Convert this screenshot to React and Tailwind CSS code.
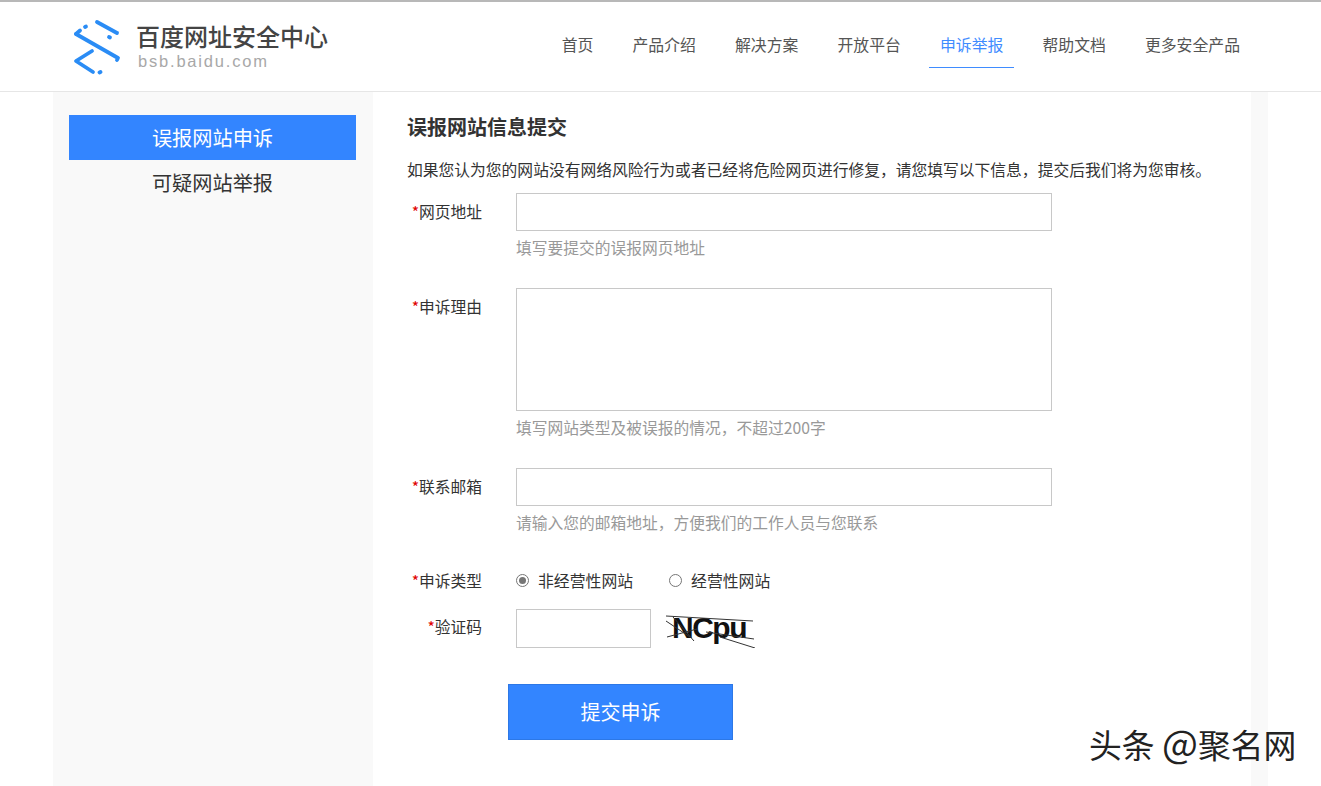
const navItems = ["首页", "产品介绍", "解决方案", "开放平台", "申诉举报", "帮助文档", "更多安全产品"];

function Logo() {
  return (
    <svg width="50" height="56" viewBox="0 0 50 56" fill="none" stroke="#2a8cf5" strokeWidth="3.8" strokeLinecap="round" strokeLinejoin="round">
      <path d="M24 3 L44 14" />
      <path d="M36 18 L37 18.500" />
      <path d="M12 8 L13 7.500" />
      <path d="M3 15 L7 11.500" />
      <path d="M3 15 L45 39 L44 41" />
      <path d="M19 32 L3 42 L20 53" />
      <path d="M26.500 53.500 L27.500 53" />
    </svg>
  );
}

function Header() {
  return (
    <header className="h-[92px] bg-white border-t-2 border-b border-t-[#b8b8b8] border-b-[#e6e6e6] flex items-center justify-between pl-[73px] pr-[70px]">
      <div className="flex items-center gap-[13px]">
        <Logo />
        <div className="flex flex-col mt-[-2px]">
          <span className="text-[24px] leading-[29px] pb-[2px] font-medium text-[#444444]">百度网址安全中心</span>
          <span className="text-[16.500px] leading-[18px] text-[#a8a8a8] tracking-[1.800px] ml-[2px] font-['Liberation_Sans',sans-serif]">bsb.baidu.com</span>
        </div>
      </div>
      <nav className="flex items-center gap-[17.100px] text-[15.850px] text-[#555555] h-[46px] mt-[-3px]">
        {navItems.map((item) => (
          <a
            key={item}
            className={
              item === "申诉举报"
                ? "h-full flex items-center px-[11px] text-[#3f8cff] border-b border-[#3f8cff]"
                : "h-full flex items-center px-[11px] border-b border-transparent"
            }
          >
            {item}
          </a>
        ))}
      </nav>
    </header>
  );
}

function Field({ label, hint, children, className }) {
  return (
    <div className={"flex " + className}>
      <label className="w-[75px] mr-[34px] shrink-0 text-right text-[15.750px] leading-[38px] text-[#333333] whitespace-nowrap">
        <span className="text-[#e00000]">*</span>
        {label}
      </label>
      <div>
        {children}
        {hint && <p className="mt-[5px] text-[15.750px] leading-[24px] text-[#999999]">{hint}</p>}
      </div>
    </div>
  );
}

function Captcha() {
  return (
    <div className="relative w-[90px] h-[40px] ml-[15px] overflow-hidden">
      <span className="absolute left-[6px] top-[2px] text-[30px] leading-[36px] font-bold text-[#111111] tracking-[-1.500px] font-['Liberation_Sans',sans-serif]">NCpu</span>
      <svg className="absolute inset-0" width="90" height="40" viewBox="0 0 90 40" fill="none" stroke="#333333" strokeWidth="1">
        <path d="M0 8 L87 13" />
        <path d="M0 13 L24 29" />
        <path d="M1 29 L31 21" />
        <path d="M7 9 L28 33" />
        <path d="M54 29 L89 40" />
        <path d="M40 24 L88 31" />
      </svg>
    </div>
  );
}

function Radio({ checked, label }) {
  return (
    <label className="flex items-center gap-[9px] text-[15.850px] text-[#333333]">
      <span className="w-[13px] h-[13px] rounded-full border border-[#767676] bg-white flex items-center justify-center">
        {checked && <span className="w-[7px] h-[7px] rounded-full bg-[#767676]" />}
      </span>
      {label}
    </label>
  );
}

export default function App() {
  return (
    <div className="h-[786px] overflow-hidden bg-white relative font-['Noto_Sans_CJK_SC','Liberation_Sans',sans-serif]">
      <Header />
      <div className="ml-[53px] w-[1215px] h-[694px] bg-[#f9f9f9] flex">
        <aside className="w-[320px] shrink-0 pl-[16px] pr-[17px] pt-[23px] text-[20.200px] text-center">
          <div className="h-[45px] leading-[45px] bg-[#3385ff] text-white">误报网站申诉</div>
          <div className="h-[45px] leading-[45px] text-[#333333]">可疑网站举报</div>
        </aside>
        <main className="w-[878px] shrink-0 bg-white pl-[34px] pt-[20px]">
          <h1 className="text-[20px] leading-[30px] font-bold text-[#333333]">误报网站信息提交</h1>
          <p className="mt-[16px] text-[15.780px] leading-[24px] text-[#333333] whitespace-nowrap">
            如果您认为您的网站没有网络风险行为或者已经将危险网页进行修复，请您填写以下信息，提交后我们将为您审核。
          </p>
          <Field label="网页地址" hint="填写要提交的误报网页地址" className="mt-[11px]">
            <input className="block w-[536px] h-[38px] bg-white border border-[#c8c8c8]" />
          </Field>
          <Field label="申诉理由" hint="填写网站类型及被误报的情况，不超过200字" className="mt-[28px]">
            <textarea className="block w-[536px] h-[123px] bg-white border border-[#c8c8c8] resize-none" />
          </Field>
          <Field label="联系邮箱" hint="请输入您的邮箱地址，方便我们的工作人员与您联系" className="mt-[28px]">
            <input className="block w-[536px] h-[38px] bg-white border border-[#c8c8c8]" />
          </Field>
          <Field label="申诉类型" className="mt-[27px] items-center">
            <div className="flex gap-[36px]">
              <Radio checked label="非经营性网站" />
              <Radio label="经营性网站" />
            </div>
          </Field>
          <Field label="验证码" className="mt-[8px]">
            <div className="flex items-center">
              <input className="block w-[135px] h-[39px] bg-white border border-[#c8c8c8]" />
              <Captcha />
            </div>
          </Field>
          <button className="block ml-[101px] mt-[36px] w-[225px] h-[56px] bg-[#3385ff] border border-[#2d78e6] text-white text-[20px]">提交申诉</button>
        </main>
      </div>
      <div className="absolute left-[1089px] top-[720px] text-[32.800px] leading-[44px] text-[#222222] whitespace-nowrap">
        头条 <span className="text-[38px]">@</span>聚名网
      </div>
    </div>
  );
}
